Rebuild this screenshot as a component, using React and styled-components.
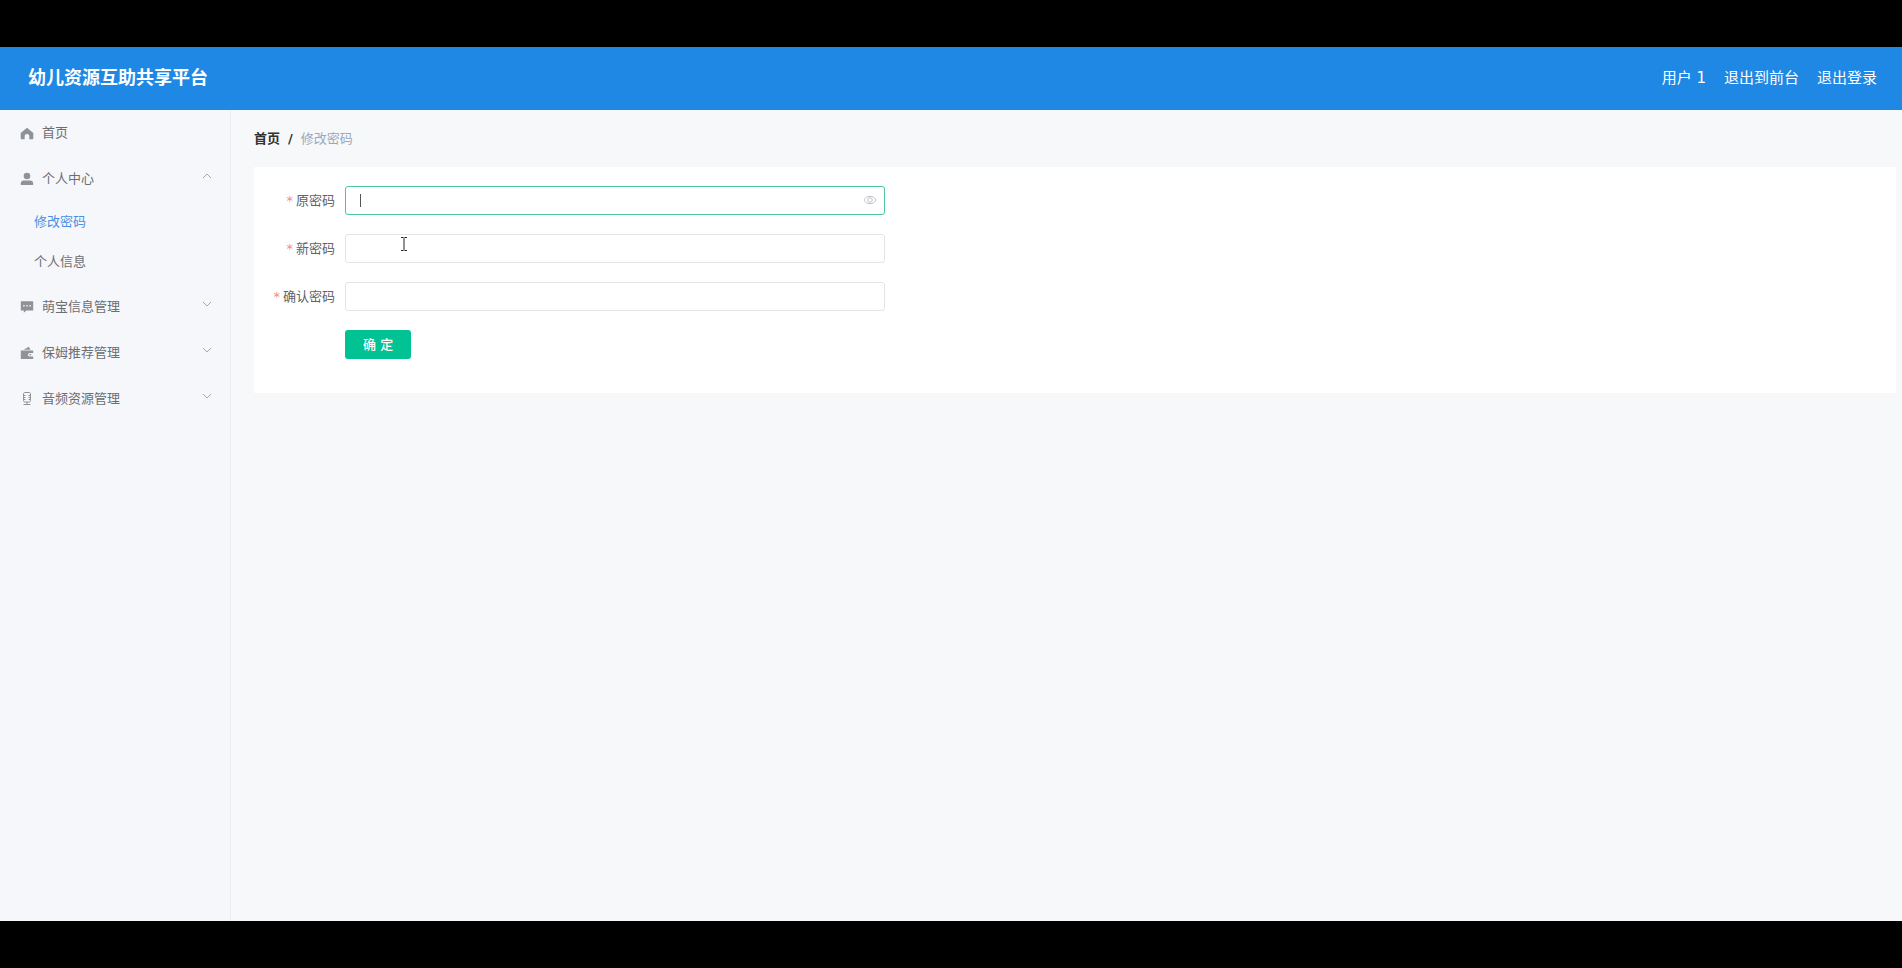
import { useState } from 'react';
import styled, { createGlobalStyle } from 'styled-components';

const menus = [
  {
    title: '个人中心',
    icon: UserIcon,
    open: true,
    children: [
      { title: '修改密码', active: true },
      { title: '个人信息' },
    ],
  },
  { title: '萌宝信息管理', icon: CommentIcon },
  { title: '保姆推荐管理', icon: WalletIcon },
  { title: '音频资源管理', icon: MicIcon },
];

export default function App() {
  return (
    <>
      <GlobalStyle />
      <Screen>
        <Header />
        <Body>
          <Sidebar />
          <Main>
            <Breadcrumb aria-label="breadcrumb">
              <HomeCrumb href="#">首页</HomeCrumb>
              <Separator>/</Separator>
              <CurrentCrumb>修改密码</CurrentCrumb>
            </Breadcrumb>
            <PasswordForm />
          </Main>
        </Body>
      </Screen>
    </>
  );
}

function Header() {
  return (
    <TopBar>
      <SiteTitle>幼儿资源互助共享平台</SiteTitle>
      <TopLinks>
        <span>用户 1</span>
        <a href="#">退出到前台</a>
        <a href="#">退出登录</a>
      </TopLinks>
    </TopBar>
  );
}

function Sidebar() {
  return (
    <Side>
      <MenuLink href="#">
        <HomeIcon />
        <MenuText>首页</MenuText>
      </MenuLink>
      {menus.map(({ title, icon: Icon, open, children }) => (
        <div key={title}>
          <MenuButton type="button" aria-expanded={!!open}>
            <Icon />
            <MenuText>{title}</MenuText>
            <Arrow $open={open} viewBox="0 0 10 6">
              <path d="M1 1l4 4 4-4" />
            </Arrow>
          </MenuButton>
          {children && (
            <SubMenu>
              {children.map((item) => (
                <SubLink key={item.title} href="#" $active={item.active}>
                  {item.title}
                </SubLink>
              ))}
            </SubMenu>
          )}
        </div>
      ))}
    </Side>
  );
}

function PasswordForm() {
  const [form, setForm] = useState({ old: '', next: '', confirm: '' });
  const change = (key) => (e) => setForm({ ...form, [key]: e.target.value });

  return (
    <Card onSubmit={(e) => e.preventDefault()}>
      <FormItem>
        <Label htmlFor="old">原密码</Label>
        <InputBox $focus>
          {!form.old && <Caret />}
          <Input id="old" type="password" value={form.old} onChange={change('old')} />
          <EyeButton type="button" aria-label="显示密码">
            <EyeIcon />
          </EyeButton>
        </InputBox>
      </FormItem>
      <FormItem>
        <Label htmlFor="next">新密码</Label>
        <InputBox>
          <Input id="next" type="password" value={form.next} onChange={change('next')} />
          <Pointer viewBox="0 0 8 16">
            <path d="M1 1.5h2.500M4.500 1.500H7M4 2v12M1 14.500h2.500M4.500 14.500H7" />
          </Pointer>
        </InputBox>
      </FormItem>
      <FormItem>
        <Label htmlFor="confirm">确认密码</Label>
        <InputBox>
          <Input id="confirm" type="password" value={form.confirm} onChange={change('confirm')} />
        </InputBox>
      </FormItem>
      <Actions>
        <SubmitButton type="submit">确 定</SubmitButton>
      </Actions>
    </Card>
  );
}

function HomeIcon() {
  return (
    <MenuIcon viewBox="0 0 14 14">
      <path d="M7 1.700L.7 7v5.200c0 .7.400 1.100 1.100 1.100h2.900v-3.200c0-1.300.9-2.100 2.300-2.100s2.300.8 2.300 2.100v3.200h2.900c.7 0 1.100-.4 1.100-1.100V7z" />
    </MenuIcon>
  );
}

function UserIcon() {
  return (
    <MenuIcon viewBox="0 0 14 14">
      <circle cx="7" cy="4" r="3.3" />
      <path d="M.8 13v-1.600C.8 9.600 2 8.500 3.800 8.500h6.400c1.800 0 3 1.100 3 2.900V13z" />
    </MenuIcon>
  );
}

function CommentIcon() {
  return (
    <MenuIcon viewBox="0 0 14 14">
      <path
        fillRule="evenodd"
        d="M.8 1.200h12.400v9.300H6.400L3.800 12.700v-2.200h-3zM3.200 5.100v1.400h1.400V5.100zm3.100 0v1.400h1.400V5.100zm3.100 0v1.400h1.400V5.100z"
      />
    </MenuIcon>
  );
}

function WalletIcon() {
  return (
    <MenuIcon viewBox="0 0 14 14">
      <path d="M3.600 3.800L8.800.8l1.700 3zM.8 4.400h12.400v2.500H9.900c-1.200 0-1.900.8-1.900 1.800s.7 1.800 1.900 1.800h3.300V13H.8z" />
      <circle cx="10.300" cy="8.700" r=".9" />
    </MenuIcon>
  );
}

function MicIcon() {
  return (
    <MenuIcon viewBox="0 0 14 14">
      <path
        fill="none"
        stroke="currentColor"
        d="M5 .5h4c.9 0 1.500.6 1.500 1.500v6.500c0 .9-.6 1.500-1.500 1.500H5c-.9 0-1.500-.6-1.500-1.500V2C3.500 1.100 4.100.5 5 .5zM7 10v2.500M3.500 12.500h7M3.500 3.500h2M3.500 5.500h2M3.500 7.500h2M8.500 3.500h2M8.500 5.500h2M8.500 7.500h2"
      />
    </MenuIcon>
  );
}

function EyeIcon() {
  return (
    <svg viewBox="0 0 14 10" width="14" height="10" fill="none" stroke="currentColor">
      <path d="M1 5c1.400-2.500 3.400-3.700 6-3.700S11.600 2.500 13 5c-1.400 2.500-3.400 3.700-6 3.700S2.400 7.500 1 5z" />
      <circle cx="7" cy="5" r="2.300" />
    </svg>
  );
}

const GlobalStyle = createGlobalStyle`
  * {
    box-sizing: border-box;
  }

  body {
    margin: 0;
    background: #000;
    font-family: 'DejaVu Sans', 'Noto Sans CJK SC', sans-serif;
    font-size: 13px;
    line-height: 20px;
  }

  a {
    color: inherit;
    text-decoration: none;
  }

  button,
  input {
    font: inherit;
  }
`;

const Screen = styled.div`
  display: flex;
  flex-direction: column;
  min-height: 100vh;
  padding: 47px 0;
  background: #000;
`;

const TopBar = styled.header`
  display: flex;
  justify-content: space-between;
  align-items: center;
  height: 63px;
  padding: 0 25px 2px 28px;
  background: #1f88e5;
  color: #fff;
`;

const SiteTitle = styled.h1`
  margin: 0;
  font-size: 18px;
  line-height: 24px;
  font-weight: 700;
`;

const TopLinks = styled.nav`
  display: flex;
  gap: 18px;
  font-size: 15px;
`;

const Body = styled.div`
  display: flex;
  flex: 1;
  background: #f6f8fa;
`;

const Side = styled.nav`
  flex: none;
  width: 231px;
  border-right: 1px solid #eeeff2;
  background: #f5f7fb;
  color: #6c6e73;
`;

const MenuLink = styled.a`
  display: flex;
  align-items: center;
  gap: 8px;
  height: 46px;
  padding: 0 18px 0 20px;
`;

const MenuButton = styled.button`
  display: flex;
  align-items: center;
  gap: 8px;
  width: 100%;
  height: 46px;
  padding: 0 18px 0 20px;
  border: unset;
  background-color: unset;
  color: inherit;
  cursor: pointer;
`;

const MenuIcon = styled.svg`
  width: 14px;
  height: 14px;
  color: #8f9297;
  fill: currentColor;
`;

const MenuText = styled.span`
  flex: 1;
  text-align: left;
`;

const Arrow = styled.svg`
  width: 10px;
  height: 6px;
  margin-bottom: 6px;
  fill: none;
  stroke: #a4a7ac;
  transform: ${({ $open }) => ($open ? 'rotate(180deg)' : 'none')};
`;

const SubMenu = styled.div`
  padding-bottom: 2px;
`;

const SubLink = styled.a`
  display: block;
  padding-left: 34px;
  line-height: 40px;
  color: ${({ $active }) => ($active ? '#4a8fe2' : 'inherit')};
`;

const Main = styled.main`
  flex: 1;
  min-width: 0;
  padding: 0 6px 0 23px;
`;

const Breadcrumb = styled.nav`
  display: flex;
  align-items: center;
  gap: 8px;
  height: 57px;
`;

const HomeCrumb = styled.a`
  color: #303133;
  font-weight: 700;
`;

const Separator = styled.span`
  color: #303133;
  font-weight: 700;
`;

const CurrentCrumb = styled.span`
  color: #97a8be;
`;

const Card = styled.form`
  padding: 19px 19px 34px 0;
  background: #fff;
`;

const FormItem = styled.div`
  display: flex;
  align-items: center;
  max-width: 631px;
  margin-bottom: 19px;
`;

const Label = styled.label`
  flex: none;
  width: 91px;
  padding-right: 10px;
  color: #606266;
  text-align: right;

  &::before {
    content: '*';
    margin-right: 3px;
    color: #f78989;
  }
`;

const InputBox = styled.div`
  position: relative;
  display: flex;
  flex: 1;
  align-items: center;
  height: 29px;
  padding: 0 7px 0 14px;
  border: 1px solid ${({ $focus }) => ($focus ? '#4fc59b' : '#e2e4e9')};
  border-radius: 3px;
  background: #fff;
`;

const Caret = styled.span`
  width: 1px;
  height: 13px;
  background: #555;
`;

const Input = styled.input`
  flex: 1;
  min-width: 0;
  height: 100%;
  padding: 0;
  border: unset;
  outline: none;
  background: none;
  color: #606266;
`;

const EyeButton = styled.button`
  display: flex;
  padding: 0 0 2px;
  border: unset;
  background-color: unset;
  color: #bfc2c8;
  cursor: pointer;
`;

/* text cursor hovering over the field */
const Pointer = styled.svg`
  position: absolute;
  top: 1px;
  left: 54px;
  width: 8px;
  height: 16px;
  fill: none;
  stroke: #222;
  pointer-events: none;
`;

const Actions = styled.div`
  padding-left: 91px;
`;

const SubmitButton = styled.button`
  display: block;
  height: 29px;
  padding: 0 18px;
  border: unset;
  border-radius: 3px;
  background: #00c292;
  color: #fff;
  font-weight: 500;
  cursor: pointer;
`;
